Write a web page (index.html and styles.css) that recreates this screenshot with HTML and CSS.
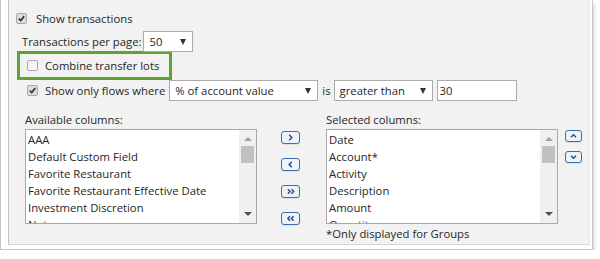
FILE: index.html
```html
<!DOCTYPE html>
<html lang="en">
<head>
  <meta charset="UTF-8" />
  <title>Transactions settings</title>
  <link rel="stylesheet" href="styles.css">
</head>
<body>
  <div class="frame">
    <div class="panel">
      <label class="row show-row">
        <span class="check on"><svg viewBox="0 0 11 11"><path d="M2.2 5.6 L4.6 8 L8.8 2.6"/></svg></span>
        Show transactions
      </label>

      <div class="row per-page">
        Transactions per page:
        <span class="select sel-page"><span class="sel-text">50</span><span class="caret"></span></span>
      </div>

      <label class="row highlight">
        <span class="check"></span>
        Combine transfer lots
      </label>

      <div class="row flows">
        <span class="check on"><svg viewBox="0 0 11 11"><path d="M2.2 5.6 L4.6 8 L8.8 2.6"/></svg></span>
        <span class="flows-label">Show only flows where</span>
        <span class="select sel-measure"><span class="sel-text">% of account value</span><span class="caret"></span></span>
        <span class="is">is</span>
        <span class="select sel-op"><span class="sel-text">greater than</span><span class="caret"></span></span>
        <span class="field">30</span>
      </div>

      <div class="columns">
        <div class="col">
          <div class="col-label">Available columns:</div>
          <div class="listbox">
            <ul>
              <li>AAA</li>
              <li>Default Custom Field</li>
              <li>Favorite Restaurant</li>
              <li>Favorite Restaurant Effective Date</li>
              <li>Investment Discretion</li>
              <li>Notes</li>
            </ul>
            <div class="scrollbar">
              <span class="arrow up"></span>
              <span class="thumb"></span>
              <span class="arrow down"></span>
            </div>
          </div>
        </div>

        <div class="movers">
          <span class="btn"><svg viewBox="0 0 19 12"><path d="M8 3 L11 6 L8 9"/></svg></span>
          <span class="btn"><svg viewBox="0 0 19 12"><path d="M11 3 L8 6 L11 9"/></svg></span>
          <span class="btn"><svg viewBox="0 0 19 12"><path d="M6.5 3.5 L9 6 L6.5 8.5 M10.5 3.5 L13 6 L10.5 8.5"/></svg></span>
          <span class="btn"><svg viewBox="0 0 19 12"><path d="M9 3.5 L6.5 6 L9 8.5 M13 3.5 L10.5 6 L13 8.5"/></svg></span>
        </div>

        <div class="col">
          <div class="col-label">Selected columns:</div>
          <div class="listbox">
            <ul>
              <li>Date</li>
              <li>Account*</li>
              <li>Activity</li>
              <li>Description</li>
              <li>Amount</li>
              <li>Quantity</li>
            </ul>
            <div class="scrollbar">
              <span class="arrow up"></span>
              <span class="thumb"></span>
              <span class="arrow down"></span>
            </div>
          </div>
          <div class="note">*Only displayed for Groups</div>
        </div>

        <div class="order">
          <span class="btn sq"><svg viewBox="0 0 17 12"><path d="M5.5 7.5 L8.5 4.5 L11.5 7.5"/></svg></span>
          <span class="btn sq"><svg viewBox="0 0 17 12"><path d="M5.5 4.5 L8.5 7.5 L11.5 4.5"/></svg></span>
        </div>
      </div>
    </div>
  </div>
</body>
</html>
```

FILE: styles.css
```css
html, body {
  margin: 0;
  padding: 0;
  background: #fff;
  font-family: "Open Sans", "Noto Sans", sans-serif;
  font-size: 11.3px;
  color: #262626;
}
.frame {
  width: 582px;
  height: 246px;
  padding: 0 2px 3px 7px;
  border: 1px solid #c6c6c6;
  border-top: none;
  box-shadow: 2px 3px 3px rgba(0,0,0,0.12);
}
.panel {
  height: 245px;
  box-sizing: border-box;
  background: #f2f2f2;
  border-left: 1px solid #c4c4c4;
  border-bottom: 1px solid #d4d4d4;
  border-right: 1px solid #e6e6e6;
  padding-left: 7px;
}
.row {
  display: flex;
  align-items: center;
  white-space: nowrap;
}
.show-row {
  padding-top: 9px;
  height: 18px;
}
.check {
  display: inline-block;
  box-sizing: border-box;
  width: 11px;
  height: 11px;
  border: 1px solid #a9a9a9;
  border-radius: 2px;
  background: #f6f6f6;
  margin-right: 9px;
  flex: none;
}
.check.on {
  background: #dcdcdc;
}
.check svg {
  display: block;
  width: 9px;
  height: 9px;
}
.check svg path {
  fill: none;
  stroke: #333;
  stroke-width: 2;
}
.per-page {
  margin-top: 4px;
  padding-left: 6px;
  height: 21px;
}
.select {
  display: inline-flex;
  align-items: center;
  box-sizing: border-box;
  height: 21px;
  background: #fff;
  border: 1px solid #ababab;
  padding-left: 5px;
}
.sel-text {
  flex: 1;
}
.caret {
  width: 0;
  height: 0;
  border-left: 3.5px solid transparent;
  border-right: 3.5px solid transparent;
  border-top: 6px solid #333;
  margin-right: 6px;
}
.sel-page {
  width: 50px;
  margin-left: 2px;
}
.highlight {
  width: 155px;
  height: 29px;
  box-sizing: border-box;
  border: 3px solid #61a232;
  margin: -1px 0 0 1px;
  padding-left: 7px;
}
.highlight .check {
  margin-right: 7px;
}
.flows {
  padding-left: 11px;
  height: 21px;
}
.flows .check {
  margin-right: 7px;
}
.flows-label {
  margin-right: 4px;
}
.sel-measure {
  width: 149px;
}
.is {
  margin: 0 3px 0 4px;
}
.sel-op {
  width: 99px;
}
.field {
  display: inline-flex;
  align-items: center;
  box-sizing: border-box;
  width: 80px;
  height: 21px;
  margin-left: 4px;
  padding-left: 2px;
  background: #fff;
  border: 1px solid #ababab;
}
.columns {
  display: flex;
  margin-top: 10px;
  padding-left: 9px;
}
.col {
  width: 232px;
}
.col-label {
  height: 18px;
  line-height: 17px;
}
.listbox {
  display: flex;
  box-sizing: border-box;
  height: 95px;
  background: #fff;
  border: 1px solid #a9a9a9;
  overflow: hidden;
}
.listbox ul {
  flex: 1;
  list-style: none;
  margin: 0;
  padding: 1px 0 0 2px;
  overflow: hidden;
}
.listbox li {
  height: 17px;
  line-height: 17px;
  white-space: nowrap;
}
.scrollbar {
  width: 17px;
  background: #f0f0f0;
  display: flex;
  flex-direction: column;
  align-items: center;
}
.arrow {
  width: 0;
  height: 0;
  border-left: 4px solid transparent;
  border-right: 4px solid transparent;
}
.arrow.up {
  border-bottom: 4px solid #a3a3a3;
  margin-top: 7px;
}
.arrow.down {
  border-top: 4px solid #505050;
  margin-top: auto;
  margin-bottom: 7px;
}
.thumb {
  width: 13px;
  height: 17px;
  background: #c1c1c1;
  margin-top: 5px;
}
.movers {
  display: flex;
  flex-direction: column;
  gap: 14px;
  padding: 20px 26px 0 24px;
}
.btn {
  display: block;
  box-sizing: border-box;
  width: 19px;
  height: 13px;
  border: 1px solid #3d6fa6;
  border-radius: 3px;
  background: #eef3f9;
  box-shadow: 0 1px 0 rgba(0,0,0,0.08);
}
.btn svg {
  display: block;
  width: 17px;
  height: 11px;
}
.btn svg path {
  fill: none;
  stroke: #1f4f86;
  stroke-width: 1.6;
}
.btn.sq {
  width: 17px;
  height: 12px;
}
.btn.sq svg {
  width: 15px;
  height: 10px;
}
.note {
  margin-top: 1px;
  height: 17px;
  line-height: 17px;
}
.order {
  display: flex;
  flex-direction: column;
  gap: 9px;
  padding: 19px 0 0 7px;
}
```
